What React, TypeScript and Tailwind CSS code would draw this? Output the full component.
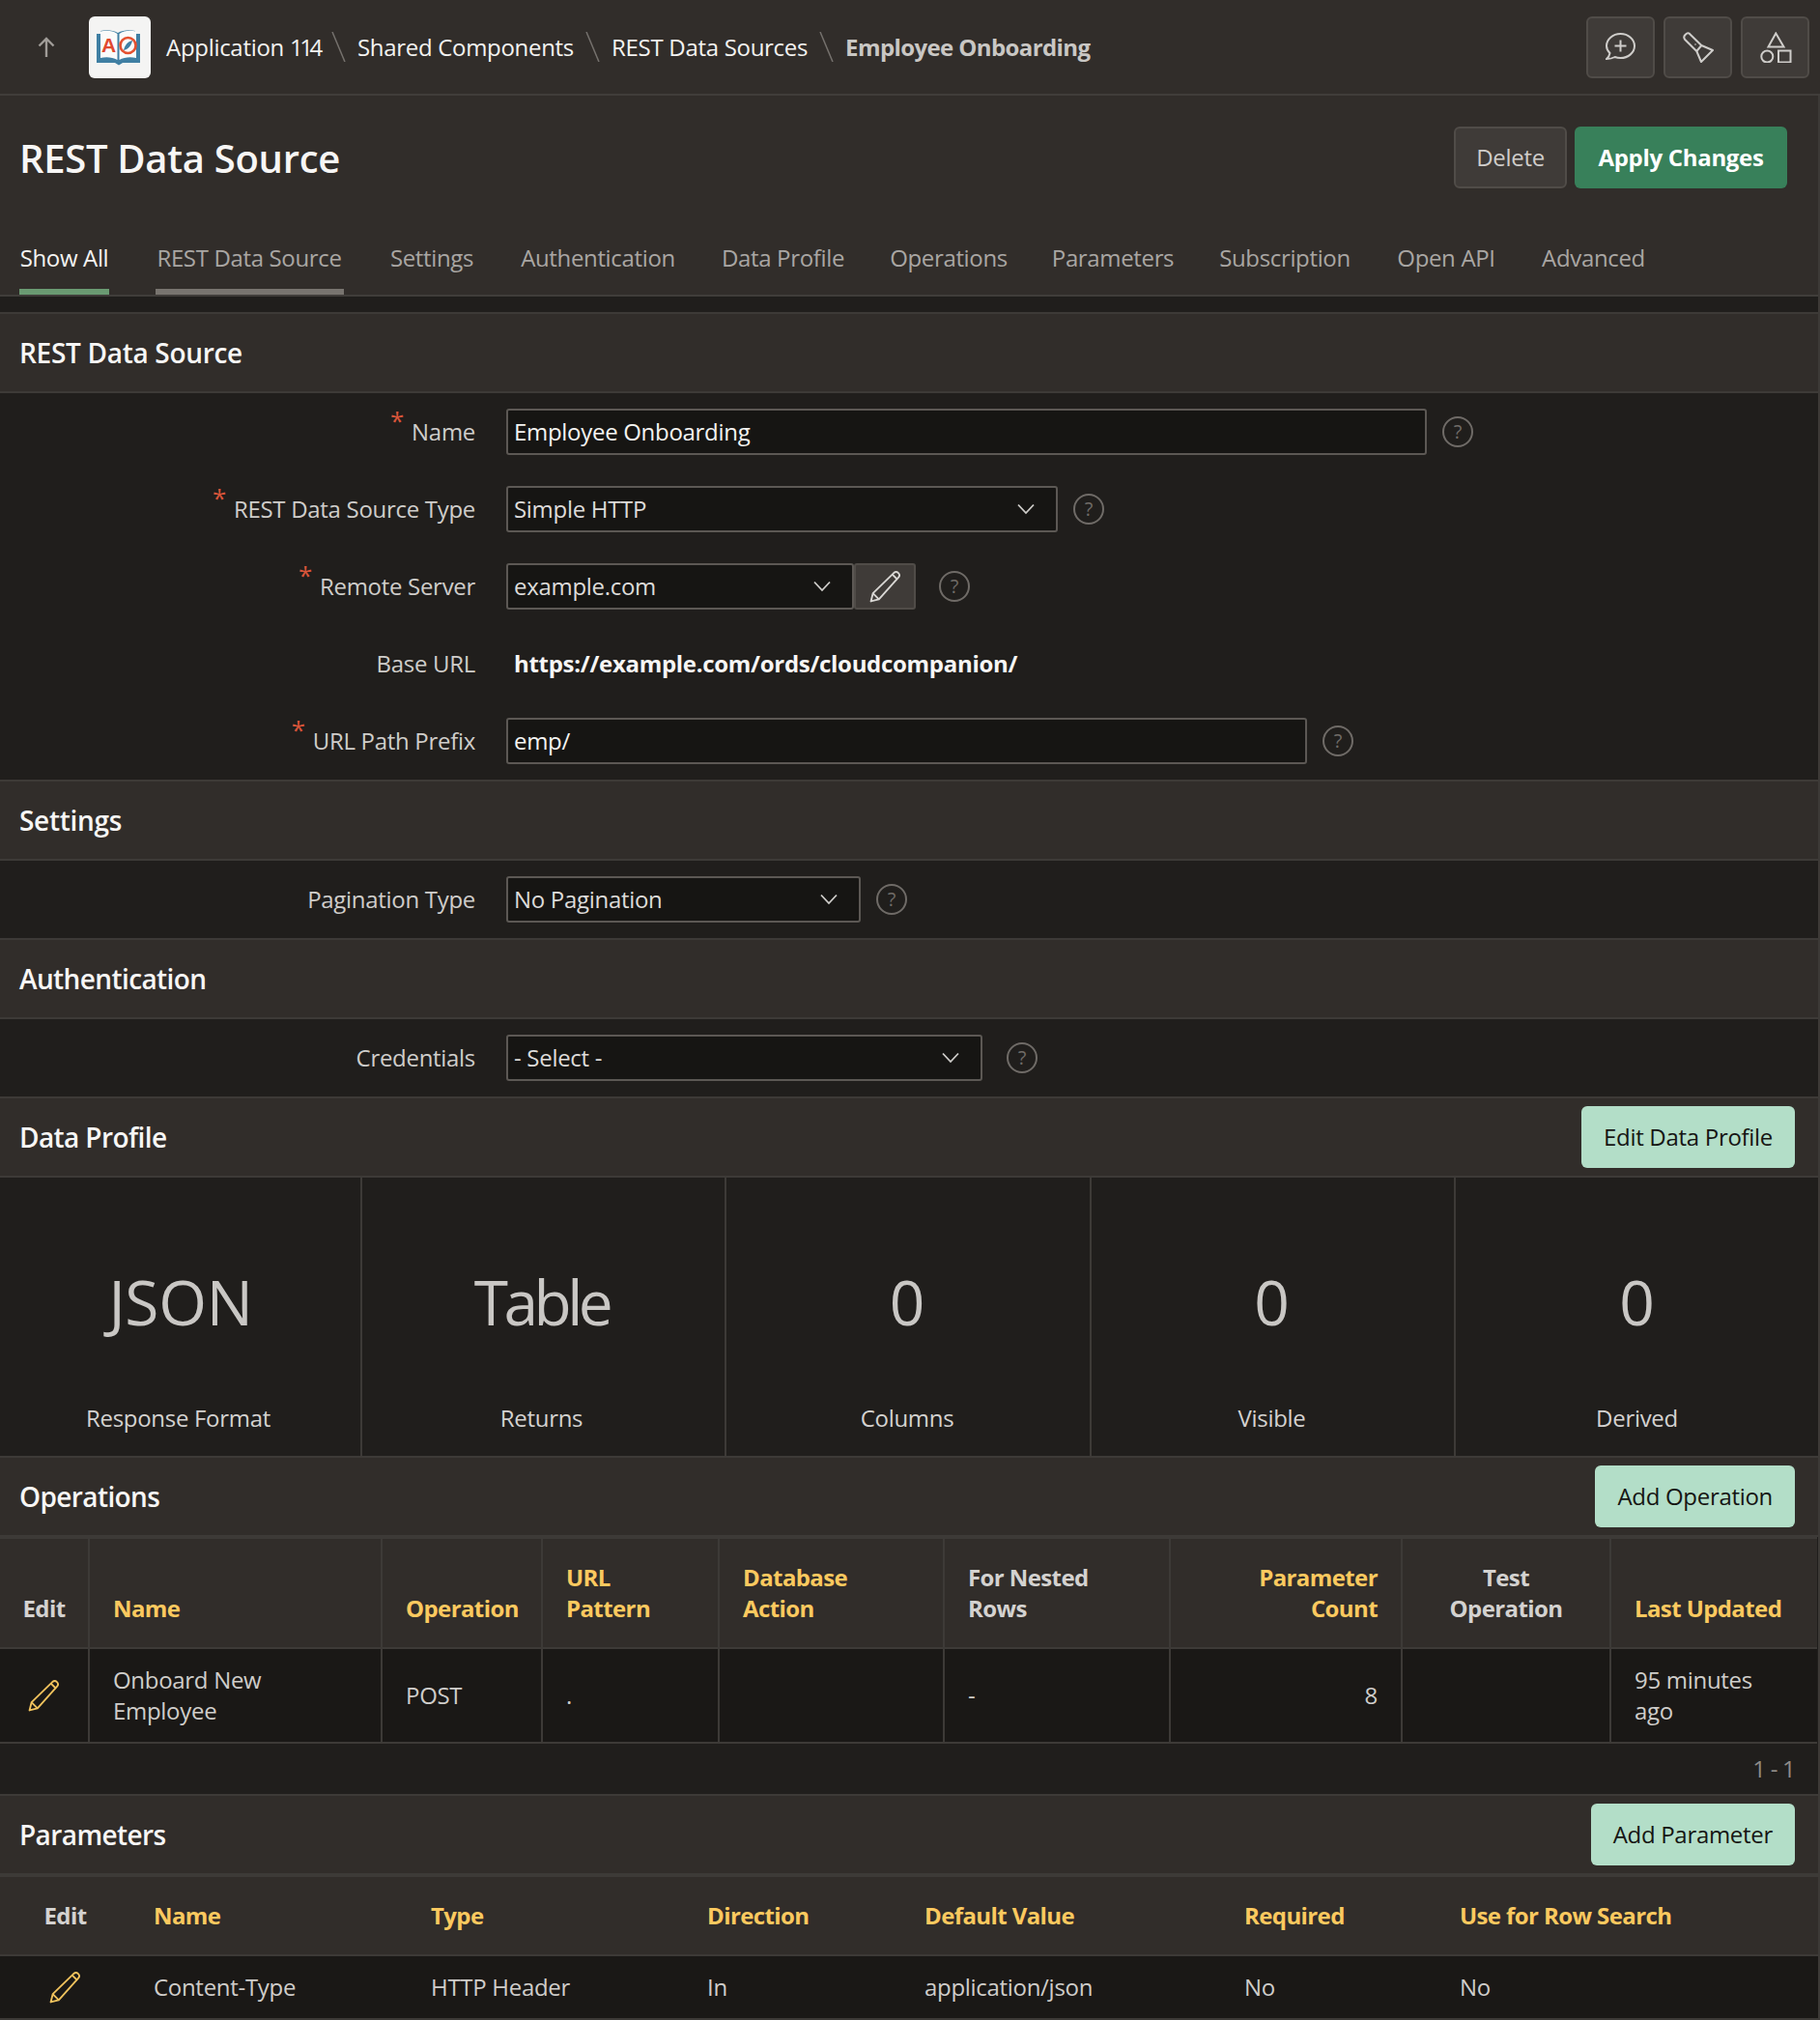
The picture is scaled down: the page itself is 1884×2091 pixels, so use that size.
import type { ReactNode } from "react";

const border = "border-[#3d3a37]";

function Logo() {
	return (
		<div className="flex h-16 w-16 items-center justify-center rounded-md bg-[#f4f4f3]">
			<svg width="64" height="64" viewBox="0 0 64 64">
				<path d="M8 18h4v-3c6-1.500 13-1 18 2 5-3 12-3.500 18-2v3h5v30H35l-4 2.500-4-2.500H8z" fill="#3f7fa3" />
				<path d="M12 15.500c6-1.500 13-1 17.500 2.500v27c-5-3-12-3.500-17.500-2zM49 15.500c-6-1.500-13-1-17.500 2.500v27c5-3 12-3.500 17.500-2z" fill="#fbfbfa" />
				<text x="20.500" y="37" textAnchor="middle" fontFamily="Liberation Sans" fontWeight="700" fontSize="21" fill="#e1492f">A</text>
				<circle cx="40.500" cy="30" r="8" fill="none" stroke="#e5512f" strokeWidth="2.600" />
				<path d="M45 25c-5 1-8 5-9 10 5-1 8-5 9-10z" fill="#3f7fa3" />
			</svg>
		</div>
	);
}

function ChatPlus() {
	return (
		<svg className="mt-[2px]" width="32" height="32" viewBox="0 0 32 32" fill="none" stroke="#cfcdca" strokeWidth="2">
			<path d="M15.500 1C23.500 1 30 6.600 30 13.500 30 20.500 23.500 26 15.500 26c-2 0-4-.3-5.800-1C7 26.500 4 27 1 27c2-1.500 3-3.500 3.500-6C2 18.500 1 16 1 13.500 1 6.600 7.500 1 15.500 1z" />
			<path d="M15.500 7.500v12M9.500 13.500h12" />
		</svg>
	);
}

function Flashlight() {
	return (
		<svg width="32" height="32" viewBox="0 0 32 32" fill="none" stroke="#cfcdca" strokeWidth="2" strokeLinejoin="round">
			<path d="M6.700 1.700 19.300 14 31 19 19 31 14.300 20 2 7.700C.8 6 1 4.500 2.500 3l.5-.5c1.200-1.300 2.500-1.500 3.700-.8z" />
			<path d="M19.300 14 14.300 20" />
			<circle cx="13" cy="13" r="0.800" fill="#cfcdca" stroke="none" />
		</svg>
	);
}

function Shapes() {
	return (
		<svg width="34" height="32" viewBox="0 0 32 32" fill="none" stroke="#cfcdca" strokeWidth="2">
			<path d="M16.300 1.500 8.500 15.500H24.500z" />
			<circle cx="7.300" cy="25.500" r="6" />
			<rect x="19" y="19.500" width="12.500" height="12" />
		</svg>
	);
}

function Pencil({ color }: { color: string }) {
	return (
		<svg width="33" height="33" viewBox="0 0 32 32" fill="none" stroke={color} strokeWidth="1.800" strokeLinejoin="round">
			<path d="M1.500 30.500 3.500 22.500 24.500 2c1.500-1.300 3.200-1.300 4.500 0s1.500 3 .2 4.500L9.500 28.500z" />
			<path d="M23 3.500 28 8.500M3.500 22.500 9.500 28.500" />
		</svg>
	);
}

function Chevron() {
	return (
		<svg width="20" height="12" viewBox="0 0 20 12" fill="none" stroke="#cfcdca" strokeWidth="1.800">
			<path d="M2 1.500 10 10 18 1.500" />
		</svg>
	);
}

function Help() {
	return (
		<div className="flex h-8 w-8 items-center justify-center rounded-full border-2 border-[#6f6b67] text-[20px] leading-none text-[#6f6b67]">
			?
		</div>
	);
}

function TopButton({ children }: { children: ReactNode }) {
	return (
		<div className="flex h-16 w-[71px] items-center justify-center rounded-md border-2 border-[#504c48] bg-[#3f3b38]">
			{children}
		</div>
	);
}

function Crumb({ children }: { children: ReactNode }) {
	return (
		<>
			<span className="text-[#f4f3f1]">{children}</span>
			<svg className="mx-[12px]" width="15" height="31" viewBox="0 0 15 31" stroke="#75716d" strokeWidth="1.500">
				<path d="M1 0 14 31" />
			</svg>
		</>
	);
}

function TopBar() {
	return (
		<div className="flex h-[99px] items-center border-b-2 border-[#403d3a] pr-[11px] pl-[38px]">
			<svg width="20" height="22" viewBox="0 0 20 22" fill="none" stroke="#a09c98" strokeWidth="2.400">
				<path d="M10 21V2M2.500 9.500 10 2l7.500 7.500" />
			</svg>
			<div className="mr-[16px] ml-[34px]">
				<Logo />
			</div>
			<div className="flex items-center">
				<Crumb>
					Application <span className="tracking-[-3.400px]">114</span>
				</Crumb>
				<Crumb>Shared Components</Crumb>
				<Crumb>REST Data Sources</Crumb>
				<span className="font-bold tracking-[-0.600px] text-[#c9c7c4]">Employee Onboarding</span>
			</div>
			<div className="ml-auto flex gap-[9px]">
				<TopButton>
					<ChatPlus />
				</TopButton>
				<TopButton>
					<Flashlight />
				</TopButton>
				<TopButton>
					<Shapes />
				</TopButton>
			</div>
		</div>
	);
}

const tabs = [
	{ label: "REST Data Source", width: "w-[195px]" },
	{ label: "Settings", width: "w-[88px]" },
	{ label: "Authentication", width: "w-[161px]" },
	{ label: "Data Profile", width: "w-[127px]" },
	{ label: "Operations", width: "w-[121px]" },
	{ label: "Parameters", width: "w-[124px]" },
	{ label: "Subscription", width: "w-[137px]" },
	{ label: "Open API", width: "w-[102px]" },
	{ label: "Advanced", width: "w-[108px]" },
];

function PageHeader() {
	return (
		<div className="border-b-2 border-[#403d3a] px-5">
			<div className="flex h-24 items-center justify-between pt-8 pr-[12px]">
				<h1 className="pt-[2px] text-[40px] leading-[64px] font-semibold text-[#f7f6f5]">REST Data Source</h1>
				<div className="flex gap-2">
					<div className="flex h-16 w-[117px] items-center justify-center rounded-md border-2 border-[#504c48] bg-[#3f3b38] text-[#cfcdca]">
						Delete
					</div>
					<div className="flex h-16 w-[220px] items-center justify-center rounded-md bg-[#38805a] font-bold text-white">
						Apply Changes
					</div>
				</div>
			</div>
			<div className="mt-10 flex gap-[47.5px] tracking-[-0.350px]">
				<div className="flex h-[70px] w-[93px] items-center justify-center border-b-[6px] border-[#6a9a72] whitespace-nowrap text-[#f4f3f1]">
					Show All
				</div>
				{tabs.map((tab, i) => (
					<div
						key={tab.label}
						className={`flex h-[70px] min-w-0 items-center justify-center border-b-[6px] whitespace-nowrap text-[#a9a6a3] ${tab.width} ${i === 0 ? "border-[#78746f]" : "border-transparent"}`}
					>
						{tab.label}
					</div>
				))}
			</div>
		</div>
	);
}

function SectionHeader({ title, action, loose }: { title: string; action?: string; loose?: boolean }) {
	return (
		<div className={`flex h-[84px] items-center justify-between border-y-2 ${border} bg-[#312d2a] pr-6 pl-5`}>
			<h2 className={`text-[28px] font-semibold text-[#f7f6f5] ${loose ? "tracking-[-0.300px]" : "tracking-[-0.600px]"}`}>{title}</h2>
			{action && (
				<div className="flex h-16 items-center rounded-md bg-[#b3dec8] px-[23px] text-[#161513]">{action}</div>
			)}
		</div>
	);
}

function FormRow({ label, required, children }: { label: string; required?: boolean; children: ReactNode }) {
	return (
		<div className="flex h-20 items-center">
			<div className="flex w-[492px] justify-end text-[#cfcdca]">
				{required && <span className="mt-[-10px] mr-2 text-[26px] leading-[32px] text-[#d9553a]">*</span>}
				<span>{label}</span>
			</div>
			<div className="ml-8 flex items-center">{children}</div>
		</div>
	);
}

function TextInput({ value, width }: { value: string; width: string }) {
	return (
		<div className={`flex h-12 items-center rounded-[3px] border-2 border-[#5c5854] bg-[#161513] px-[6px] text-[#f4f3f1] ${width}`}>
			{value}
		</div>
	);
}

function Select({ value, width }: { value: string; width: string }) {
	return (
		<div className={`flex h-12 items-center justify-between rounded-[3px] border-2 border-[#5c5854] bg-[#161513] pr-[21px] pl-[6px] text-[#dddbd9] ${width}`}>
			{value}
			<Chevron />
		</div>
	);
}

function Stat({ value, label, className }: { value: string; label: string; className: string }) {
	return (
		<div className={`flex flex-col items-center ${className}`}>
			<div className="mt-[84px] text-[64px] leading-[90px] text-[#c9c7c4]">{value}</div>
			<div className="mt-[57px] text-[#d4d2d0]">{label}</div>
		</div>
	);
}

const cellBorder = "border-2 border-[#3d3a37] first:border-l-0 last:border-r-0";

function OperationsTable() {
	return (
		<table className="w-[1881px] table-fixed border-collapse leading-8">
			<thead>
				<tr className="h-[114px] bg-[#312d2a] align-bottom tracking-[-0.600px] text-[#fbc95f]">
					<th className={`${cellBorder} w-[92px] pb-[24px] text-center font-bold text-[#d4d2d0]`}>Edit</th>
					<th className={`${cellBorder} w-[303px] px-6 pb-[24px] text-left font-bold`}>Name</th>
					<th className={`${cellBorder} w-[166px] px-6 pb-[24px] text-left font-bold`}>Operation</th>
					<th className={`${cellBorder} w-[183px] px-6 pb-[24px] text-left font-bold`}>
						URL
						<br />
						Pattern
					</th>
					<th className={`${cellBorder} w-[233px] px-6 pb-[24px] text-left font-bold`}>
						Database
						<br />
						Action
					</th>
					<th className={`${cellBorder} w-[234px] px-6 pb-[24px] text-left font-bold text-[#d4d2d0]`}>
						For Nested
						<br />
						Rows
					</th>
					<th className={`${cellBorder} w-[240px] px-6 pb-[24px] text-right font-bold`}>
						Parameter
						<br />
						Count
					</th>
					<th className={`${cellBorder} w-[216px] px-6 pb-[24px] text-center font-bold text-[#d4d2d0]`}>
						Test
						<br />
						Operation
					</th>
					<th className={`${cellBorder} px-6 pb-[24px] text-left font-bold`}>Last Updated</th>
				</tr>
			</thead>
			<tbody>
				<tr className="h-[98px] bg-[#1a1816] text-[#cfcdca]">
					<td className={cellBorder}>
						<div className="flex justify-center">
							<Pencil color="#f0c25d" />
						</div>
					</td>
					<td className={`${cellBorder} px-6`}>
						Onboard New
						<br />
						Employee
					</td>
					<td className={`${cellBorder} px-6`}>POST</td>
					<td className={`${cellBorder} px-6`}>.</td>
					<td className={cellBorder} />
					<td className={`${cellBorder} px-6`}>-</td>
					<td className={`${cellBorder} px-6 text-right`}>8</td>
					<td className={cellBorder} />
					<td className={`${cellBorder} px-6`}>
						95 minutes
						<br />
						ago
					</td>
				</tr>
			</tbody>
		</table>
	);
}

function ParametersTable() {
	return (
		<table className="w-full table-fixed border-collapse">
			<thead>
				<tr className="h-[82px] border-y-2 border-[#3d3a37] bg-[#312d2a] text-left tracking-[-0.600px] text-[#fbc95f]">
					<th className="w-[135px] text-center font-bold text-[#d4d2d0]">Edit</th>
					<th className="w-[287px] px-6 font-bold">Name</th>
					<th className="w-[286px] px-6 font-bold">Type</th>
					<th className="w-[225px] px-6 font-bold">Direction</th>
					<th className="w-[331px] px-6 font-bold">Default Value</th>
					<th className="w-[223px] px-6 font-bold">Required</th>
					<th className="px-6 font-bold">Use for Row Search</th>
				</tr>
			</thead>
			<tbody>
				<tr className="h-[66px] border-b-2 border-[#3d3a37] bg-[#1a1816] text-[#cfcdca]">
					<td>
						<div className="flex justify-center">
							<Pencil color="#f0c25d" />
						</div>
					</td>
					<td className="px-6">Content-Type</td>
					<td className="px-6">HTTP Header</td>
					<td className="px-6">In</td>
					<td className="px-6">application/json</td>
					<td className="px-6">No</td>
					<td className="px-6">No</td>
				</tr>
			</tbody>
		</table>
	);
}

export default function App() {
	return (
		<div className="h-[2091px] w-[1884px] overflow-hidden bg-[#312d2a] font-['Open_Sans',sans-serif] text-[24px] tracking-[-0.300px]">
			<TopBar />
			<div className="border-r-2 border-[#3d3a37]">
				<PageHeader />
				<div className="bg-[#201e1c] pt-4">
					<SectionHeader title="REST Data Source" loose />
					<FormRow label="Name" required>
						<TextInput value="Employee Onboarding" width="w-[953px]" />
						<div className="ml-4">
							<Help />
						</div>
					</FormRow>
					<FormRow label="REST Data Source Type" required>
						<Select value="Simple HTTP" width="w-[571px]" />
						<div className="ml-4">
							<Help />
						</div>
					</FormRow>
					<FormRow label="Remote Server" required>
						<Select value="example.com" width="w-[360px]" />
						<div className="flex h-12 w-[64px] items-center justify-center rounded-[3px] border-2 border-[#504c48] bg-[#3f3b38]">
							<Pencil color="#d9d7d4" />
						</div>
						<div className="ml-6">
							<Help />
						</div>
					</FormRow>
					<FormRow label="Base URL">
						<span className="pl-2 font-bold text-[#f7f6f5]">https://example.com/ords/cloudcompanion/</span>
					</FormRow>
					<FormRow label="URL Path Prefix" required>
						<TextInput value="emp/" width="w-[829px]" />
						<div className="ml-4">
							<Help />
						</div>
					</FormRow>
					<SectionHeader title="Settings" loose />
					<FormRow label="Pagination Type">
						<Select value="No Pagination" width="w-[367px]" />
						<div className="ml-4">
							<Help />
						</div>
					</FormRow>
					<SectionHeader title="Authentication" />
					<FormRow label="Credentials">
						<Select value="- Select -" width="w-[493px]" />
						<div className="ml-[25px]">
							<Help />
						</div>
					</FormRow>
					<SectionHeader title="Data Profile" action="Edit Data Profile" />
					<div className="flex h-[288px] divide-x-2 divide-[#3d3a37]">
						<Stat value="JSON" label="Response Format" className="w-[375px] pr-1 [&>div:first-child]:pl-[5px]" />
						<Stat value="Table" label="Returns" className="w-[377px] pr-1 [&>div:first-child]:tracking-[-4.500px]" />
						<Stat value="0" label="Columns" className="w-[378px] pr-[2px]" />
						<Stat value="0" label="Visible" className="w-[377px] pr-[2px]" />
						<Stat value="0" label="Derived" className="flex-1" />
					</div>
					<SectionHeader title="Operations" action="Add Operation" />
					<OperationsTable />
					<div className="flex h-[52px] items-center justify-end pr-6 tracking-[-0.800px] text-[#8f8b87]">1 - 1</div>
					<SectionHeader title="Parameters" action="Add Parameter" />
					<ParametersTable />
				</div>
			</div>
		</div>
	);
}
